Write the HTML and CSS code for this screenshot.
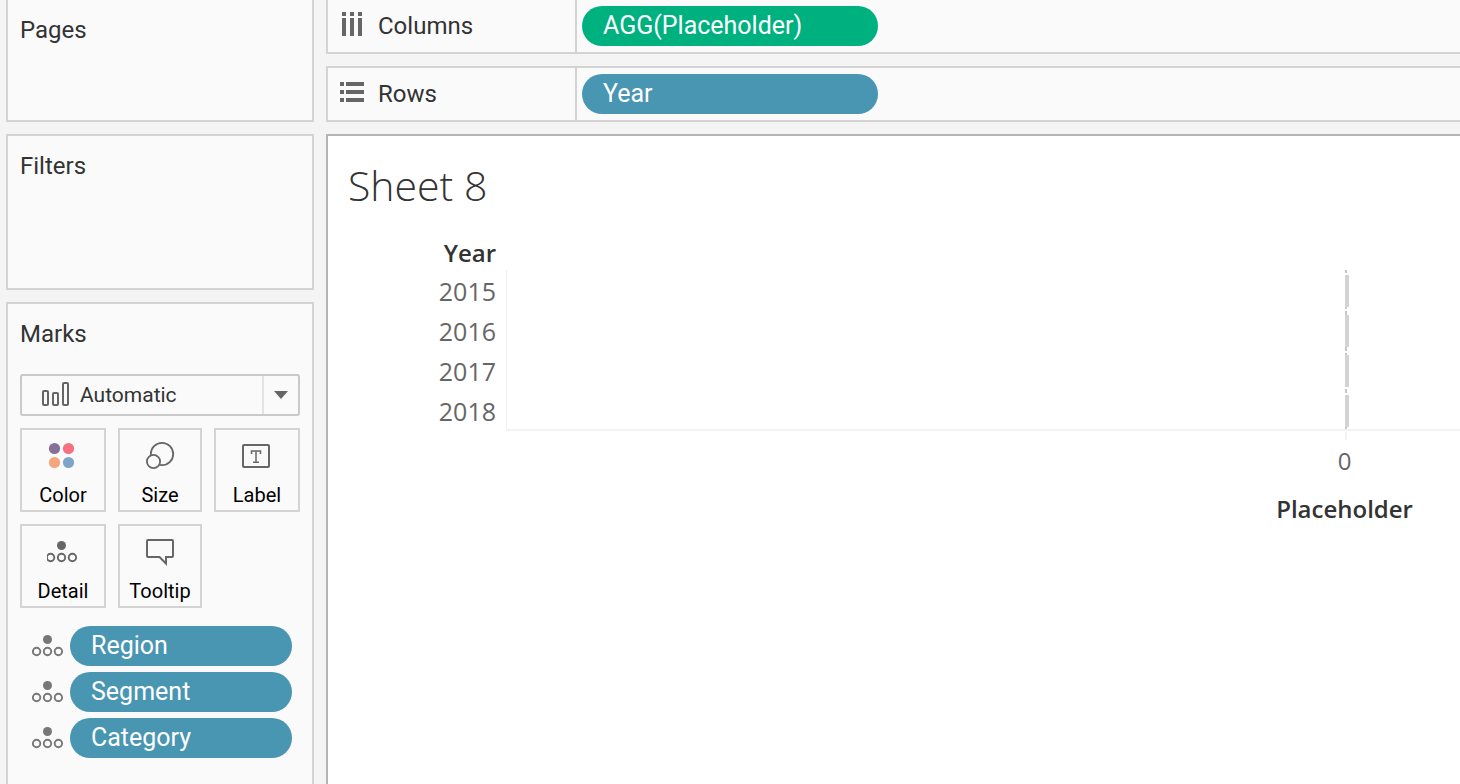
FILE: index.html
```html
<!DOCTYPE html>
<html lang="en">
<head>
    <meta charset="UTF-8">
    <title>Sheet 8</title>
    <link rel="stylesheet" href="styles.css">
</head>
<body>
<!-- shared icon: one filled dot above three rings -->
<svg class="defs" width="0" height="0" aria-hidden="true">
    <symbol id="icon-detail" viewBox="0 0 32 22">
        <circle cx="15.5" cy="4.5" r="4.5" fill="currentColor"/>
        <g fill="none" stroke="currentColor" stroke-width="1.9">
            <circle cx="4.6" cy="16.5" r="3.7"/>
            <circle cx="15.5" cy="16.5" r="3.7"/>
            <circle cx="26.4" cy="16.5" r="3.7"/>
        </g>
    </symbol>
</svg>
<div class="workspace">
    <aside class="sidebar">
        <section class="card pages">
            <h2>Pages</h2>
        </section>
        <section class="card filters">
            <h2>Filters</h2>
        </section>
        <section class="card marks">
            <h2 id="marks_title">Marks</h2>
            <div class="mark-type">
                <select aria-labelledby="marks_title">
                    <option>Automatic</option>
                </select>
                <svg class="mark-icon" width="28" height="24" viewBox="0 0 28 24" fill="none" stroke="#666" stroke-width="2">
                    <rect x="1" y="9" width="5" height="14" rx="1"/>
                    <rect x="11" y="11" width="5" height="12" rx="1"/>
                    <rect x="21" y="1" width="5" height="22" rx="1"/>
                </svg>
                <span class="mark-arrow">
                    <svg width="14" height="8" viewBox="0 0 14 8"><path d="M0 0h14L7 8z" fill="#666"/></svg>
                </span>
            </div>
            <div class="tiles">
                <button type="button" class="tile">
                    <svg width="32" height="32" viewBox="0 0 32 32">
                        <circle cx="7.5" cy="7.5" r="5.6" fill="#866f98"/>
                        <circle cx="21.500" cy="7.5" r="5.6" fill="#f77080"/>
                        <circle cx="7.5" cy="21.5" r="5.6" fill="#f4a57c"/>
                        <circle cx="21.5" cy="21.5" r="5.6" fill="#80a3ca"/>
                    </svg>
                    Color
                </button>
                <button type="button" class="tile">
                    <svg width="32" height="32" viewBox="0 0 32 32" stroke="#666" stroke-width="1.800">
                        <circle cx="18" cy="13" r="11.2" fill="none"/>
                        <circle cx="9.500" cy="20.500" r="6.6" fill="#fafafa"/>
                    </svg>
                    Size
                </button>
                <button type="button" class="tile">
                    <svg width="32" height="32" viewBox="0 0 32 32" fill="none" stroke="#666">
                        <rect x="2" y="4" width="26" height="22" rx="1" stroke-width="2"/>
                        <path d="M10.5 13v-3h9v3M15 10v11M12 21.3h6" stroke-width="1.5"/>
                    </svg>
                    Label
                </button>
                <button type="button" class="tile">
                    <svg width="32" height="32" viewBox="0 0 32 32" color="#666"><use href="#icon-detail" x="-1" y="4" width="32" height="22"/></svg>
                    Detail
                </button>
                <button type="button" class="tile">
                    <svg width="32" height="32" viewBox="0 0 32 32" fill="none" stroke="#666" stroke-width="2">
                        <path d="M4 3h24a1 1 0 0 1 1 1v15a1 1 0 0 1-1 1h-6v6.500l-6.500-6.500H4a1 1 0 0 1-1-1V4a1 1 0 0 1 1-1z"/>
                    </svg>
                    Tooltip
                </button>
            </div>
            <ul class="fields">
                <li>
                    <svg width="32" height="22" color="#777"><use href="#icon-detail"/></svg>
                    <button type="button" class="pill">Region</button>
                </li>
                <li>
                    <svg width="32" height="22" color="#777"><use href="#icon-detail"/></svg>
                    <button type="button" class="pill">Segment</button>
                </li>
                <li>
                    <svg width="32" height="22" color="#777"><use href="#icon-detail"/></svg>
                    <button type="button" class="pill">Category</button>
                </li>
            </ul>
        </section>
    </aside>
    <main class="content">
        <section class="shelf shelf-columns">
            <h2>
                <svg width="24" height="28" viewBox="0 0 24 28" fill="#666">
                    <path d="M2 0h4v4H2zM10 0h4v4h-4zM18 0h4v4h-4zM2 6h4v18H2zM10 6h4v18h-4zM18 6h4v18h-4z"/>
                </svg>
                Columns
            </h2>
            <button type="button" class="pill green">AGG(Placeholder)</button>
        </section>
        <section class="shelf">
            <h2>
                <svg width="24" height="24" viewBox="0 0 24 24" fill="#666">
                    <path d="M0 0h4v4H0zM0 8h4v4H0zM0 16h4v4H0zM6 0h18v4H6zM6 8h18v4H6zM6 16h18v4H6z"/>
                </svg>
                Rows
            </h2>
            <button type="button" class="pill">Year</button>
        </section>
        <section class="sheet">
            <h1>Sheet 8</h1>
            <div class="chart">
                <div class="years">
                    <h3>Year</h3>
                    <ul>
                        <li>2015</li>
                        <li>2016</li>
                        <li>2017</li>
                        <li>2018</li>
                    </ul>
                </div>
                <div class="plot">
                    <div class="pane">
                        <svg width="8" height="159" viewBox="0 0 8 159" shape-rendering="crispEdges">
                            <!-- dashed zero line -->
                            <path d="M4 0h2v3H4zM4 5h2v34H4zM4 41h2v40H4zM4 83h2v34H4zM4 119h2v4H4zM4 125h2v34H4z" fill="#c6c6c6"/>
                            <!-- bars -->
                            <path d="M4 5h4v32H4zM4 45h4v32H4zM4 85h4v32H4zM4 125h4v32H4z" fill="#d3d3d3"/>
                        </svg>
                    </div>
                    <div class="axis">
                        <svg width="8" height="9" viewBox="0 0 8 9" shape-rendering="crispEdges"><path d="M4 1h2v8H4z" fill="#f2f2f2"/></svg>
                        <span>0</span>
                        <strong>Placeholder</strong>
                    </div>
                </div>
            </div>
        </section>
    </main>
</div>
</body>
</html>
```
FILE: styles.css
```css
*{
    margin: 0;
    padding: 0;
    box-sizing: border-box;
    list-style: none;
}
body{
    background-color: #f4f4f4;
    color: #333;
    font-family: Roboto, "Liberation Sans", sans-serif;
    font-size: 24px;
    line-height: 32px;
    overflow: hidden;
}
h2{
    font-size: 24px;
    font-weight: 400;
}
button, select{
    font-family: inherit;
    cursor: pointer;
}
svg{
    display: block;
    flex: none;
}
.defs{
    position: absolute;
}
.workspace{
    display: flex;
    gap: 12px;
    min-height: 100vh;
    padding-left: 6px;
}

/* left side */
.sidebar{
    display: flex;
    flex-direction: column;
    gap: 12px;
    width: 308px;
    flex: none;
}
.card{
    background-color: #fafafa;
    border: 2px solid #d3d3d3;
    padding: 14px 12px;
}
.pages{
    height: 122px;
    border-top: none;
}
.filters{
    height: 156px;
}
.marks{
    flex: 1;
    border-bottom: none;
    padding-bottom: 24px;
}
.mark-type{
    position: relative;
    margin: 24px 0 12px;
}
.mark-type select{
    display: block;
    width: 100%;
    height: 42px;
    padding-left: 58px;
    appearance: none;
    background-color: #fafafa;
    border: 2px solid #c9c9c9;
    border-radius: 3px;
    color: #333;
    font-size: 21px;
}
.mark-icon{
    position: absolute;
    left: 22px;
    top: 8px;
    pointer-events: none;
}
.mark-arrow{
    position: absolute;
    top: 2px;
    right: 2px;
    bottom: 2px;
    width: 36px;
    display: flex;
    align-items: center;
    justify-content: center;
    border-left: 2px solid #e4e4e4;
    pointer-events: none;
}
.tiles{
    display: grid;
    grid-template-columns: 86px 1fr 86px;
    gap: 12px;
}
.tile{
    display: flex;
    flex-direction: column;
    align-items: center;
    gap: 10px;
    height: 84px;
    padding-top: 11px;
    background-color: #fafafa;
    border: 2px solid #d3d3d3;
    color: #000;
    font-size: 20px;
    line-height: 24px;
}
.fields{
    display: flex;
    flex-direction: column;
    gap: 6px;
    margin-top: 18px;
    padding: 0 8px 0 12px;
}
.fields li{
    display: flex;
    align-items: center;
    gap: 6px;
}
.fields .pill{
    flex: 1;
}
.pill{
    width: 296px;
    height: 40px;
    padding: 0 21px 1px;
    border: none;
    border-radius: 20px;
    background-color: #4996b2;
    color: #fff;
    font-size: 25px;
    text-align: left;
}
.green{
    background-color: #00b180;
}

/* right side */
.content{
    display: flex;
    flex-direction: column;
    gap: 12px;
    flex: 1;
    min-width: 0;
}
.shelf{
    display: flex;
    align-items: center;
    height: 56px;
    background-color: #fafafa;
    border: 2px solid #d3d3d3;
    border-right: none;
}
.shelf-columns{
    height: 54px;
    border-top: none;
}
.shelf h2{
    display: flex;
    align-items: center;
    gap: 14px;
    align-self: stretch;
    width: 249px;
    margin-right: 5px;
    padding-left: 12px;
    border-right: 2px solid #d3d3d3;
}
.sheet{
    flex: 1;
    background-color: #fff;
    border: 2px solid #b4b4b4;
    border-right: none;
    border-bottom: none;
    font-family: "Open Sans", "Noto Sans", sans-serif;
    overflow: hidden;
}
.sheet h1{
    margin: 23px 20px 26px;
    font-size: 41px;
    font-weight: 300;
    line-height: 52px;
}
.sheet h3{
    font-size: 24px;
    font-weight: 600;
}
.chart{
    display: flex;
}
.years{
    width: 178px;
    flex: none;
    padding-right: 10px;
    text-align: right;
}
.years ul{
    margin-top: 1px;
    color: #666;
    font-size: 25px;
}
.years li{
    height: 40px;
    line-height: 42px;
}
.plot{
    flex: 1;
    min-width: 0;
    padding-top: 33px;
}
/* the pane runs past the right edge, zero is in its middle */
.pane, .axis{
    display: flex;
    width: 175.8%;
}
.pane{
    justify-content: center;
    border-left: 1px solid #f0f0f0;
    border-bottom: 2px solid #f2f2f2;
}
.axis{
    flex-direction: column;
    align-items: center;
    color: #666;
}
.axis span{
    margin-top: 5px;
}
.axis strong{
    margin-top: 16px;
    color: #333;
    font-weight: 600;
}
```
